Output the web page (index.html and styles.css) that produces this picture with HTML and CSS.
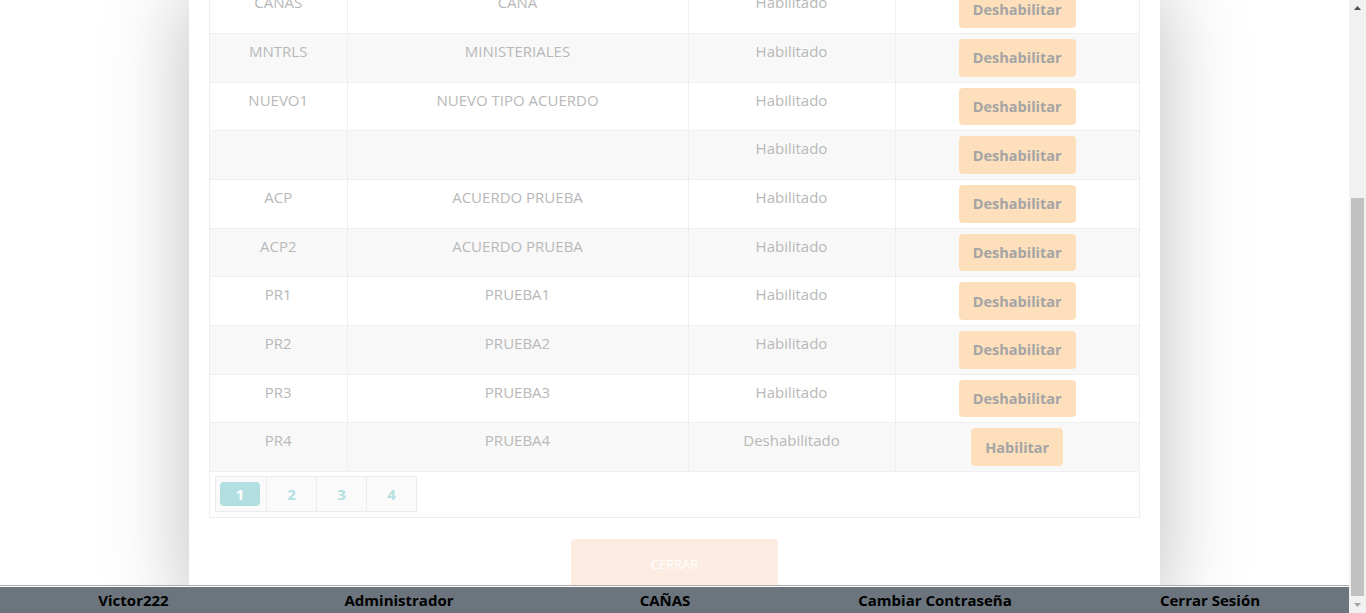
FILE: index.html
```html
<!DOCTYPE html>
<html lang="es">
<head>
<meta charset="utf-8">
<title>Tipos de acuerdo</title>
<link rel="stylesheet" href="styles.css">
</head>
<body>
<div class="app">
  <div class="main">
    <div class="stage">
      <div class="modal">
        <div class="table-box">
          <table class="grid">
            <colgroup>
              <col class="c1"><col class="c2"><col class="c3"><col class="c4">
            </colgroup>
            <tbody>
              <tr><td>CAÑAS</td><td>CAÑA</td><td>Habilitado</td><td class="act"><button class="btn-state">Deshabilitar</button></td></tr>
              <tr><td>MNTRLS</td><td>MINISTERIALES</td><td>Habilitado</td><td class="act"><button class="btn-state">Deshabilitar</button></td></tr>
              <tr><td>NUEVO1</td><td>NUEVO TIPO ACUERDO</td><td>Habilitado</td><td class="act"><button class="btn-state">Deshabilitar</button></td></tr>
              <tr><td></td><td></td><td>Habilitado</td><td class="act"><button class="btn-state">Deshabilitar</button></td></tr>
              <tr><td>ACP</td><td>ACUERDO PRUEBA</td><td>Habilitado</td><td class="act"><button class="btn-state">Deshabilitar</button></td></tr>
              <tr><td>ACP2</td><td>ACUERDO PRUEBA</td><td>Habilitado</td><td class="act"><button class="btn-state">Deshabilitar</button></td></tr>
              <tr><td>PR1</td><td>PRUEBA1</td><td>Habilitado</td><td class="act"><button class="btn-state">Deshabilitar</button></td></tr>
              <tr><td>PR2</td><td>PRUEBA2</td><td>Habilitado</td><td class="act"><button class="btn-state">Deshabilitar</button></td></tr>
              <tr><td>PR3</td><td>PRUEBA3</td><td>Habilitado</td><td class="act"><button class="btn-state">Deshabilitar</button></td></tr>
              <tr><td>PR4</td><td>PRUEBA4</td><td>Deshabilitado</td><td class="act"><button class="btn-state">Habilitar</button></td></tr>
            </tbody>
          </table>
          <div class="pager-row">
            <ul class="pager">
              <li class="page"><span class="page-active">1</span></li>
              <li class="page">2</li>
              <li class="page">3</li>
              <li class="page">4</li>
            </ul>
          </div>
        </div>
        <div class="modal-actions">
          <button class="btn-close">CERRAR</button>
        </div>
      </div>
    </div>
    <footer class="footer">
      <div class="footer-bar">
        <span class="footer-item">Victor222</span>
        <span class="footer-item">Administrador</span>
        <span class="footer-item">CAÑAS</span>
        <span class="footer-item">Cambiar Contraseña</span>
        <span class="footer-item">Cerrar Sesión</span>
      </div>
    </footer>
  </div>
  <div class="scrollbar">
    <div class="sb-arrow">
      <svg width="7" height="4" viewBox="0 0 7 4"><polygon points="3.5,0 7,4 0,4" fill="#505050"/></svg>
    </div>
    <div class="sb-thumb"></div>
    <div class="sb-arrow sb-arrow-down">
      <svg width="7" height="4" viewBox="0 0 7 4"><polygon points="0,0 7,0 3.5,4" fill="#a3a3a3"/></svg>
    </div>
  </div>
</div>
</body>
</html>
```
FILE: styles.css
```css
html, body {
  margin: 0;
  padding: 0;
  height: 100%;
  overflow: hidden;
  background: #ffffff;
}

.app {
  display: flex;
  height: 613px;
  width: 1366px;
}

.main {
  width: 1349px;
  display: flex;
  flex-direction: column;
}

.stage {
  flex: 1;
  overflow: hidden;
  background: #ffffff;
}

.modal {
  width: 931px;
  margin: -15.67px auto 0;
  padding: 0 20px 20px;
  background: #ffffff;
  box-shadow: 0 5px 80px rgba(0, 0, 0, 0.26);
}

.table-box {
  border: 1px solid #eeeeee;
}

.grid {
  width: 929px;
  border-collapse: collapse;
  table-layout: fixed;
}

.c1 { width: 137px; }
.c2 { width: 341px; }
.c3 { width: 207px; }
.c4 { width: 244px; }

.grid td {
  border: 1px solid #efefef;
  padding: 7px 8px 3px;
  vertical-align: top;
  text-align: center;
  font-family: "Open Sans", "Liberation Sans", sans-serif;
  font-size: 15px;
  line-height: 21px;
  color: #b8b8b8;
}

.grid td.act {
  padding: 5px 8px;
}

.grid tr:first-child td { border-top: 0; }
.grid td:first-child { border-left: 0; }
.grid td:last-child { border-right: 0; }

.grid tr:nth-child(even) td {
  background: #f8f8f8;
}

.btn-state {
  height: 37.67px;
  padding: 0 14px;
  border: 0;
  border-radius: 4px;
  background: #fddfbc;
  color: #a4a4a4;
  font-family: "Open Sans", "Liberation Sans", sans-serif;
  font-weight: 700;
  font-size: 14.5px;
  display: inline-block;
  vertical-align: top;
}

.pager-row {
  display: flex;
}

.pager {
  list-style: none;
  display: flex;
  margin: 4px 5px 5px;
  padding: 0;
  border: 1px solid #ececec;
}

.page {
  width: 49px;
  height: 34px;
  border-left: 1px solid #ececec;
  background: #fafafa;
  display: flex;
  align-items: center;
  justify-content: center;
  font-family: "Open Sans", "Liberation Sans", sans-serif;
  font-weight: 700;
  font-size: 15px;
  color: #b3dfe2;
}

.page:first-child {
  width: 50px;
  border-left: 0;
  justify-content: flex-start;
  padding-left: 4px;
  box-sizing: border-box;
}

.page-active {
  width: 40px;
  height: 24px;
  border-radius: 4px;
  background: #b3dfe2;
  color: #ffffff;
  display: flex;
  align-items: center;
  justify-content: center;
}

.modal-actions {
  display: flex;
  justify-content: center;
  margin-top: 21px;
}

.btn-close {
  width: 207px;
  height: 50px;
  border: 0;
  border-radius: 4px;
  background: #fcece1;
  color: #ffffff;
  font-family: "Open Sans", "Liberation Sans", sans-serif;
  font-size: 13px;
}

.footer {
  border-top: 1px solid #ababab;
  padding-top: 1px;
  background: #ffffff;
}

.footer-bar {
  height: 26px;
  background: #6c757d;
  display: grid;
  grid-template-columns: 267px 264px 268px 272px 278px;
}

.footer-item {
  text-align: center;
  font-family: "Open Sans", "Liberation Sans", sans-serif;
  font-weight: 700;
  font-size: 15px;
  line-height: 26px;
  color: #000000;
  white-space: nowrap;
}

.scrollbar {
  width: 17px;
  background: #f1f1f1;
  display: flex;
  flex-direction: column;
}

.sb-arrow {
  height: 17px;
  display: flex;
  align-items: center;
  justify-content: center;
}

.sb-thumb {
  margin: 181px 2px 0;
  height: 399px;
  background: #c1c1c1;
}

.sb-arrow-down {
  margin-top: auto;
}
```
